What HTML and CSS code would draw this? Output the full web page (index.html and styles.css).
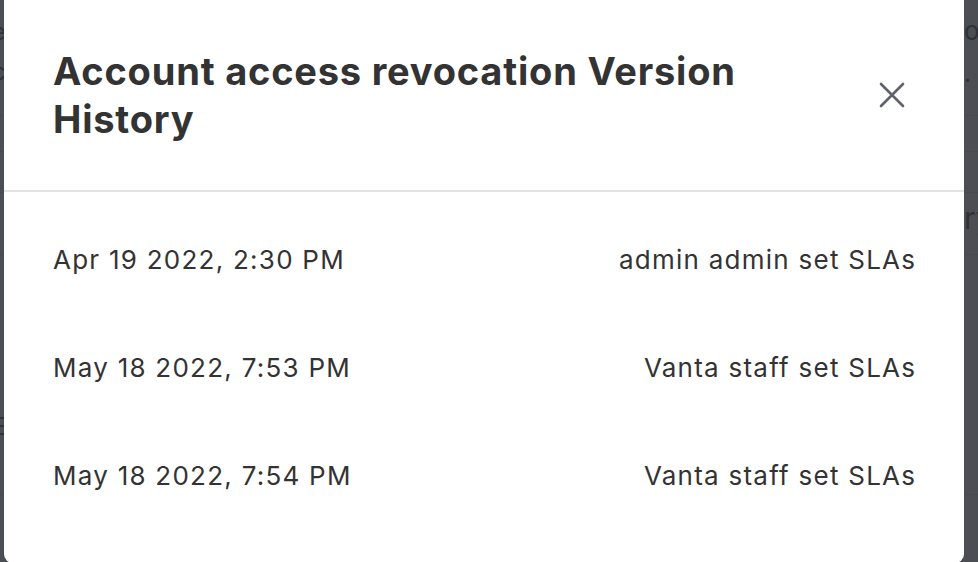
FILE: index.html
```html
<!DOCTYPE html>
<html lang="en">
<head>
<meta charset="utf-8">
<title>Version History</title>
<link rel="stylesheet" href="styles.css">
</head>
<body>
<div class="page">
  <div class="page-row r1">
    <span class="bg-left l1">e</span>
    <span class="bg-left l2">c</span>
    <span class="bg-right t1">ov</span>
    <span class="bg-right t2">.</span>
  </div>
  <div class="page-row r2"></div>
  <div class="page-row r3"></div>
  <div class="page-row r4"><span class="bg-right t3">ry</span><span class="bg-left l3">E</span></div>
  <div class="page-row r5"></div>
</div>
<div class="overlay"></div>
<div class="modal" role="dialog" aria-labelledby="modal-title">
  <div class="modal-header">
    <h1 id="modal-title" class="modal-title">Account access revocation Version History</h1>
    <button class="close-btn" aria-label="Close">
      <svg width="26" height="26" viewBox="0 0 26 26" fill="none" stroke="#5f6268" stroke-width="2.6" stroke-linecap="round">
        <path d="M2 2 L24 24 M24 2 L2 24"/>
      </svg>
    </button>
  </div>
  <ul class="history">
    <li class="history-item"><span class="date">Apr 19 2022, 2:30 PM</span><span class="event">admin admin set SLAs</span></li>
    <li class="history-item"><span class="date">May 18 2022, 7:53 PM</span><span class="event">Vanta staff set SLAs</span></li>
    <li class="history-item"><span class="date">May 18 2022, 7:54 PM</span><span class="event">Vanta staff set SLAs</span></li>
  </ul>
</div>
</body>
</html>
```
FILE: styles.css
```css
* { box-sizing: border-box; }
html, body {
  margin: 0;
  padding: 0;
  width: 978px;
  height: 562px;
  overflow: hidden;
}
body {
  font-family: Inter, "Noto Sans", "Liberation Sans", sans-serif;
  background: #4b4e52;
  position: relative;
}
.page {
  display: flex;
  flex-direction: column;
  color: #26282c;
  font-size: 24px;
}
.page-row {
  position: relative;
  border-bottom: 1px solid #44474b;
}
.r1 { height: 116px; }
.r2 { height: 36px; }
.r3 { height: 41px; }
.r4 { height: 62px; }
.r5 { height: 240px; }
.bg-left, .bg-right {
  position: absolute;
  line-height: 1;
}
.bg-left { right: calc(100% - 6px); }
.bg-right { left: 964px; }
.l1 { top: 20px; }
.l2 { top: 60px; }
.l3 { top: 222px; }
.t1 { top: 18px; font-size: 26px; }
.t2 { top: 62px; }
.t3 { top: 10px; font-size: 30px; }
.overlay {
  position: absolute;
  inset: 0;
  background: rgba(75, 78, 82, 0.25);
}
.modal {
  position: absolute;
  left: 4px;
  top: -8px;
  width: 960px;
  height: 571px;
  background: #ffffff;
  border-radius: 9px;
  display: flex;
  flex-direction: column;
  color: #333333;
}
.modal-header {
  display: flex;
  align-items: center;
  justify-content: space-between;
  padding: 55px 59px 47px 49px;
  border-bottom: 2px solid #e3e3e3;
}
.modal-title {
  margin: 0;
  font-size: 38px;
  line-height: 48px;
  font-weight: 700;
  letter-spacing: 0.8px;
  color: #333333;
  max-width: 740px;
}
.close-btn {
  background: none;
  border: 0;
  padding: 0;
  width: 26px;
  height: 26px;
  display: flex;
  align-items: center;
  justify-content: center;
  cursor: pointer;
}
.history {
  list-style: none;
  margin: 0;
  padding: 14px 49px 0 49px;
}
.history-item {
  display: flex;
  justify-content: space-between;
  align-items: center;
  height: 108px;
  font-size: 26px;
  line-height: 36px;
  letter-spacing: 1.25px;
  color: #333333;
}
.event { margin-right: -1.25px; }
```
